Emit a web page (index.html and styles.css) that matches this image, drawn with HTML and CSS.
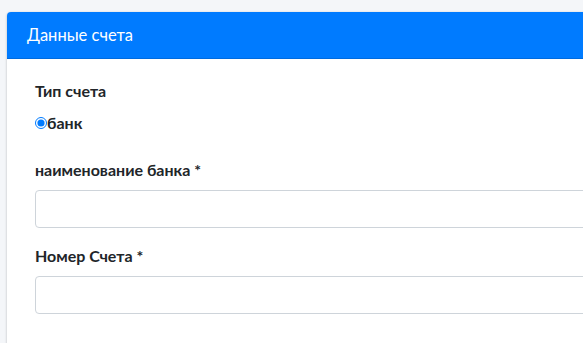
FILE: index.html
```html
<!DOCTYPE html>
<html>
<head>
    <meta charset="UTF-8">
    <title>Данные счета</title>
    <link rel="stylesheet" href="styles.css">
</head>
<body>
<div class="card">
    <div class="card-header">
        <h3 class="card-title">Данные счета</h3>
    </div>
    <div class="card-body">
        <div class="form-group radio-group">
            <label class="label">Тип счета</label>
            <div class="radio-row">
                <input type="radio" name="type" id="bank" checked>
                <label for="bank" class="radio-label">банк</label>
            </div>
        </div>
        <div class="form-group">
            <label class="label" for="bankName">наименование банка *</label>
            <input type="text" class="form-control" id="bankName">
        </div>
        <div class="form-group">
            <label class="label" for="account">Номер Счета *</label>
            <input type="text" class="form-control" id="account">
        </div>
    </div>
</div>
</body>
</html>
```
FILE: styles.css
```css
* {
    margin: 0;
    padding: 0;
    box-sizing: border-box;
}

html, body {
    width: 100%;
    height: 100%;
    overflow: hidden;
}

body {
    background: #f4f6f9;
    font-family: "Lato", "Liberation Sans", sans-serif;
    color: #212529;
    padding: 12px 0 0 7px;
}

.card {
    width: 640px;
    background: #fff;
    border-radius: 4px 0 0 0;
    box-shadow: 0 0 1px rgba(0, 0, 0, .13), 0 1px 3px rgba(0, 0, 0, .2);
}

.card-header {
    background: #007bff;
    color: #fff;
    padding: 12px 20px;
    border-radius: 4px 0 0 0;
    border-bottom: 1px solid rgba(0, 0, 0, .125);
}

.card-title {
    font-size: 16.5px;
    font-weight: 400;
    line-height: 22px;
}

.card-body {
    padding: 20px 28px 30px;
}

.form-group {
    margin-bottom: 16px;
}

.radio-group {
    margin-bottom: 23px;
}

.label {
    display: block;
    font-size: 16px;
    font-weight: 700;
    line-height: 24px;
    margin-bottom: 8px;
}

.radio-row {
    display: flex;
    align-items: center;
    height: 24px;
}

.radio-row input {
    width: 12px;
    height: 12px;
    margin: 0;
    accent-color: #007bff;
}

.radio-label {
    font-size: 16px;
    font-weight: 700;
    line-height: 24px;
}

.form-control {
    display: block;
    width: 100%;
    height: 38px;
    border: 1px solid #ced4da;
    border-radius: 4px;
    padding: 6px 12px;
    font-size: 16px;
    background: #fff;
}
```
